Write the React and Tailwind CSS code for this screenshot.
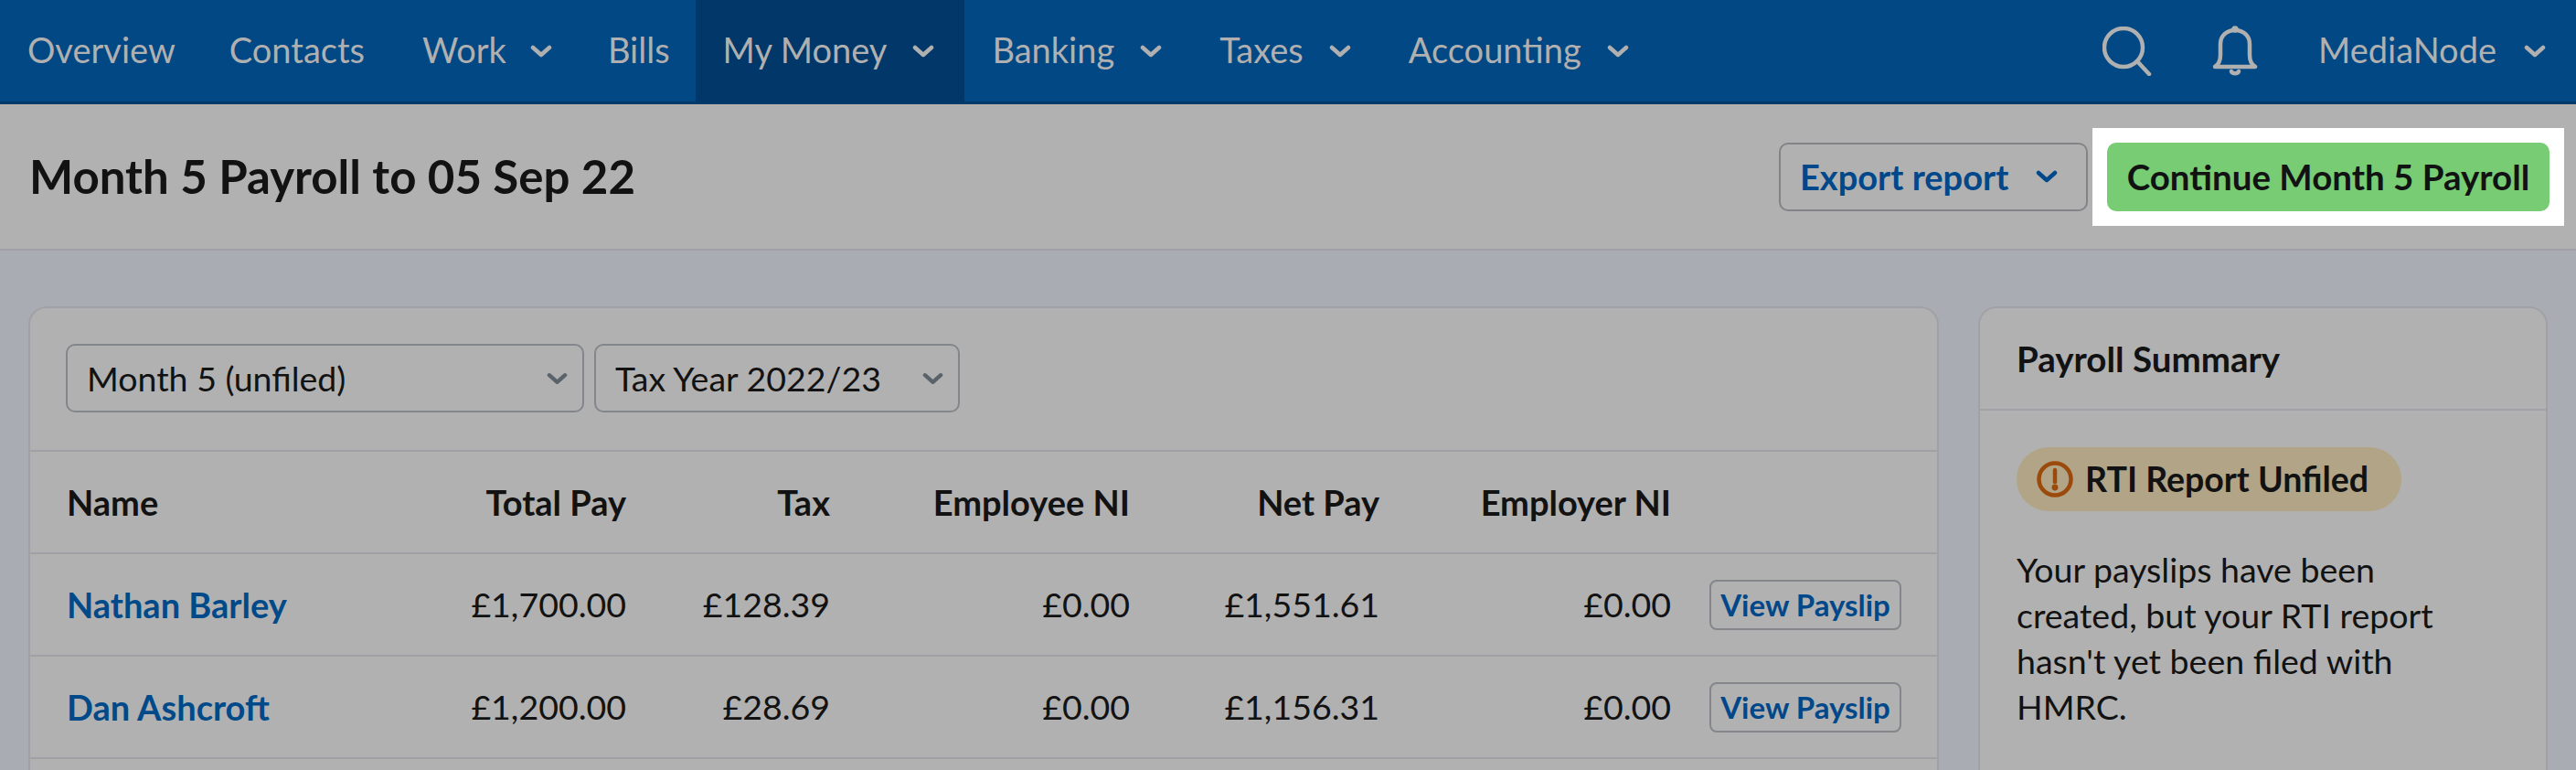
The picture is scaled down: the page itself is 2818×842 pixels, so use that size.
const Chevron = ({ className = '' }) => (
  <svg width="24" height="14" viewBox="0 0 24 14" fill="none" stroke="currentColor" strokeWidth="4.5" strokeLinecap="round" strokeLinejoin="round" className={className}>
    <polyline points="3 3 12 11 21 3" />
  </svg>
);

const NavItem = ({ label, menu, active, pad = 'pl-[30px] pr-[33px]', gap = 'ml-[28px]' }) => (
  <div className={`flex h-full items-center ${pad} ${active ? 'bg-[#013869]' : ''}`}>
    <span className="pb-[4px]">{label}</span>
    {menu && <Chevron className={gap} />}
  </div>
);

const rows = [
  { name: 'Nathan Barley', total: '£1,700.00', tax: '£128.39', ee: '£0.00', net: '£1,551.61', er: '£0.00' },
  { name: 'Dan Ashcroft', total: '£1,200.00', tax: '£28.69', ee: '£0.00', net: '£1,156.31', er: '£0.00' },
];

const columns = 'grid grid-cols-[301px_311px_223px_328px_273px_319px_1fr] items-center pl-[40px] pr-[39px] h-[112px] border-b-2 border-[#a0a1a7] text-right';

const App = () => (
  <div className="h-[842px] overflow-hidden bg-[#a9adb3] [font-family:Lato,sans-serif] text-[37.5px] leading-[50px] text-[#121212]">
    {/* Top nav */}
    <nav className="flex h-[114px] items-center justify-between border-b-[3px] border-[#013a68] bg-[#014884] text-[38px] text-[#b0b0b0]">
      <div className="flex h-full items-center">
        <NavItem label="Overview" pad="pl-[30px] pr-[29px]" />
        <NavItem label="Contacts" />
        <NavItem label="Work" menu gap="ml-[26px]" />
        <NavItem label="Bills" pad="pl-[28px] pr-[28px]" />
        <NavItem label="My Money" menu active />
        <NavItem label="Banking" menu />
        <NavItem label="Taxes" menu />
        <NavItem label="Accounting" menu />
      </div>
      <div className="flex items-center pr-[33px]">
        <svg width="54" height="54" viewBox="0 0 54 54" fill="none" stroke="currentColor" strokeWidth="4.5" strokeLinecap="round">
          <ellipse cx="23" cy="23" rx="21" ry="21" />
          <line x1="38" y1="38" x2="51" y2="52" />
        </svg>
        <svg width="50" height="55" viewBox="0 0 50 55" fill="none" stroke="currentColor" strokeWidth="4.5" strokeLinecap="round" strokeLinejoin="round" className="ml-[66px]">
          <path d="M3 45c5-3 6-7 6-13V20c0-9 7-15 16-15s16 6 16 15v12c0 6 1 10 6 13z" />
          <path d="M21 50c1 3 7 3 8 0" />
          <circle cx="25" cy="4" r="1.5" />
        </svg>
        <span className="ml-[66px] pb-[4px]">MediaNode</span>
        <Chevron className="ml-[30px]" />
      </div>
    </nav>

    {/* Page header */}
    <header className="flex h-[160px] items-center justify-between border-b-2 border-[#9f9fa5] bg-[#b1b1b1] pl-[32px] pr-[13px]">
      <h1 className="text-[51px] font-bold">Month 5 Payroll to 05 Sep 22</h1>
      <div className="flex items-center gap-[5px]">
        <button className="flex h-[75px] w-[338px] items-center justify-between rounded-[10px] border-2 border-[#828488] pl-[21px] pr-[31px] text-[38px] font-bold text-[#01488a]">
          Export report
          <Chevron />
        </button>
        <div className="bg-white p-[16px]">
          <button className="h-[75px] w-[484px] rounded-[10px] bg-[#77cc74] text-[38.5px] font-bold">Continue Month 5 Payroll</button>
        </div>
      </div>
    </header>

    <main className="flex gap-[43px] px-[31px] pt-[61px]">
      {/* Payslips table */}
      <section className="min-w-0 flex-1 rounded-t-[20px] border-x-2 border-t-2 border-[#a0a1a7] bg-[#b1b1b1]">
        <div className="flex h-[157px] items-start gap-[11px] border-b-2 border-[#a0a1a7] px-[39px] pt-[39px]">
          <div className="flex h-[75px] w-[567px] items-center justify-between rounded-[10px] border-2 border-[#83878c] pl-[21px] pr-[16px]">
            Month 5 (unfiled)
            <Chevron className="w-[23px] text-[#5a636b]" />
          </div>
          <div className="flex h-[75px] w-[400px] items-center justify-between rounded-[10px] border-2 border-[#83878c] pl-[21px] pr-[16px]">
            Tax Year 2022/23
            <Chevron className="w-[23px] text-[#5a636b]" />
          </div>
        </div>
        <div className={`${columns} text-[38px] font-bold`}>
          <div className="text-left">Name</div>
          <div>Total Pay</div>
          <div>Tax</div>
          <div>Employee NI</div>
          <div>Net Pay</div>
          <div>Employer NI</div>
          <div />
        </div>
        {rows.map((row) => (
          <div key={row.name} className={columns}>
            <div className="text-left text-[38px] font-bold text-[#014a89]">{row.name}</div>
            <div>{row.total}</div>
            <div>{row.tax}</div>
            <div>{row.ee}</div>
            <div>{row.net}</div>
            <div>{row.er}</div>
            <div className="flex justify-end">
              <button className="h-[55px] w-[210px] rounded-[8px] border-2 border-[#83878c] text-[33px] font-bold text-[#01488a]">View Payslip</button>
            </div>
          </div>
        ))}
      </section>

      {/* Summary */}
      <aside className="h-[700px] w-[623px] shrink-0 rounded-t-[20px] border-x-2 border-t-2 border-[#a0a1a7] bg-[#b1b1b1]">
        <h2 className="flex h-[112px] items-center border-b-2 border-[#a0a1a7] px-[40px] text-[38.5px] font-bold">Payroll Summary</h2>
        <div className="px-[40px] pt-[40px]">
          <div className="flex h-[70px] w-[421px] items-center rounded-full bg-[#b2a486] pl-[22px] text-[37.5px] font-bold">
            <svg width="40" height="40" viewBox="0 0 40 40" fill="none" stroke="#9b4a0c" strokeWidth="4.5" className="mr-[13px] shrink-0">
              <circle cx="20" cy="20" r="17.5" />
              <line x1="20" y1="10" x2="20" y2="23" strokeLinecap="round" />
              <circle cx="20" cy="29" r="1.2" fill="#9b4a0c" />
            </svg>
            RTI Report Unfiled
          </div>
          <p className="mt-[39px] w-[480px]">Your payslips have been created, but your RTI report hasn't yet been filed with HMRC.</p>
        </div>
      </aside>
    </main>
  </div>
);

export default App;
